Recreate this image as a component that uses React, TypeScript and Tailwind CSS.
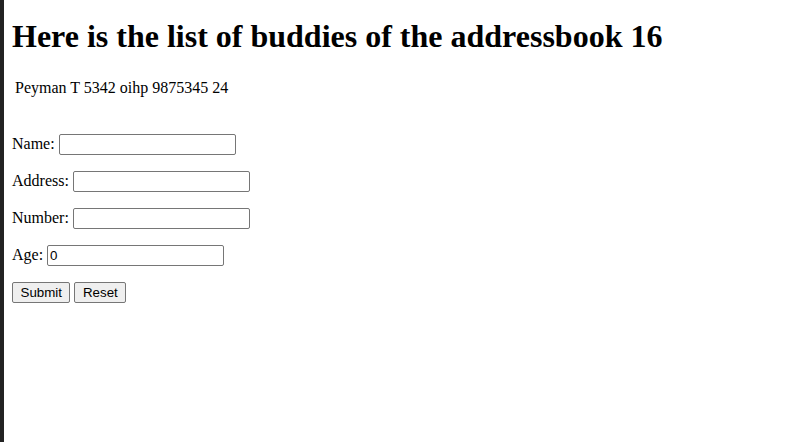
import { useState } from 'react';

const buddies = [{ name: 'Peyman T', address: '5342 oihp', number: '9875345', age: 24 }];

const inputCls =
  "h-[21px] rounded-[2px] border border-[#767676] bg-white px-[2px] py-[1px] align-baseline font-['Liberation_Sans',Arial,sans-serif] text-[13.333px] text-black";
const btnCls =
  "h-[21px] rounded-[2px] border border-[#767676] bg-[#efefef] px-[7.5px] py-[1px] font-['Liberation_Sans',Arial,sans-serif] text-[13.333px] leading-[normal] text-black";

const App = () => {
  const [name, setName] = useState('');
  const [address, setAddress] = useState('');
  const [number, setNumber] = useState('');
  const [age, setAge] = useState('0');

  const reset = () => {
    setName('');
    setAddress('');
    setNumber('');
    setAge('0');
  };

  return (
    <div className="flex min-h-[442px] bg-white font-['Liberation_Serif','Times_New_Roman',serif] text-[16px] leading-[normal] text-black">
      <div className="w-[4px] shrink-0 bg-[#222222]" />
      <div className="flex-1 px-[8px] pb-[8px]">
        <h1 className="mt-[18px] mb-[21.44px] text-[32px] font-bold leading-[normal]">
          Here is the list of buddies of the addressbook 16
        </h1>
        <table className="border-separate border-spacing-[2px]">
          <tbody>
            {buddies.map((b) => (
              <tr key={b.name}>
                <td className="p-[1px]">
                  {b.name} {b.address} {b.number} {b.age}
                </td>
              </tr>
            ))}
          </tbody>
        </table>
        <form className="pt-[18px]" onSubmit={(e) => e.preventDefault()}>
          <p className="my-[16px]">
            Name: <input className={`${inputCls} w-[177px]`} value={name} onChange={(e) => setName(e.target.value)} />
          </p>
          <p className="my-[16px]">
            Address: <input className={`${inputCls} w-[177px]`} value={address} onChange={(e) => setAddress(e.target.value)} />
          </p>
          <p className="my-[16px]">
            Number: <input className={`${inputCls} w-[177px]`} value={number} onChange={(e) => setNumber(e.target.value)} />
          </p>
          <p className="my-[16px]">
            Age: <input className={`${inputCls} w-[177px]`} value={age} onChange={(e) => setAge(e.target.value)} />
          </p>
          <p className="my-[16px]">
            <button type="submit" className={btnCls}>Submit</button>{' '}
            <button type="button" className={btnCls} onClick={reset}>Reset</button>
          </p>
        </form>
      </div>
    </div>
  );
};

export default App;
